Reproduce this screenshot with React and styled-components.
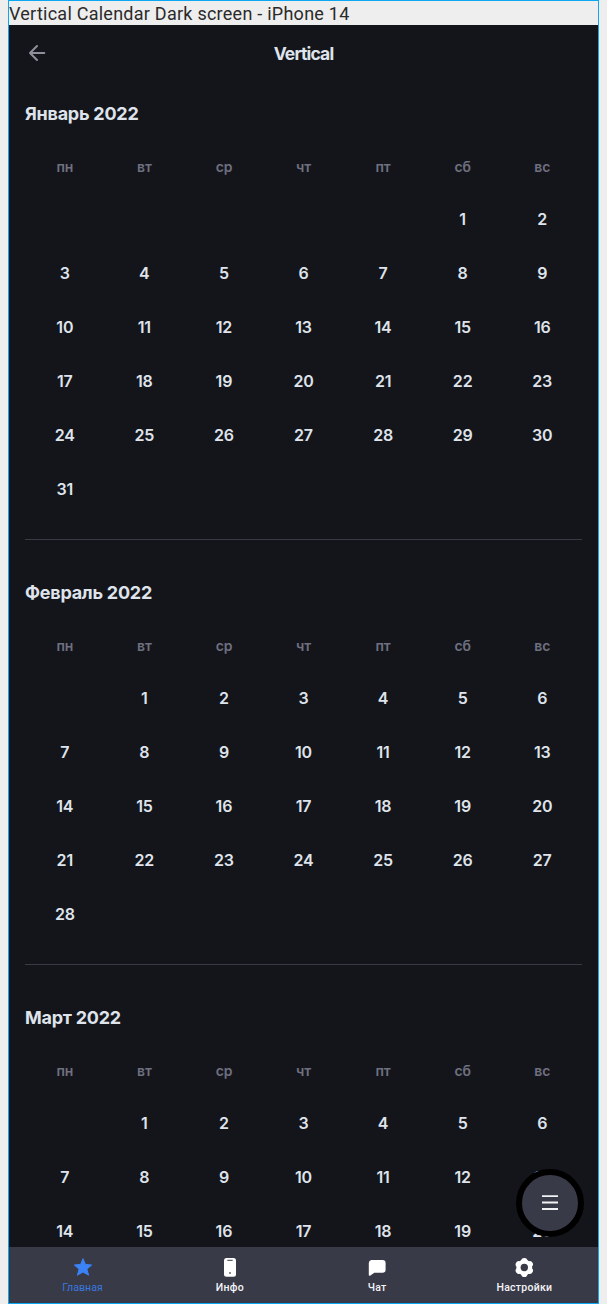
import React from 'react';
import styled, { createGlobalStyle } from 'styled-components';

const GlobalStyle = createGlobalStyle`
  *, *::before, *::after { box-sizing: border-box; }
  html, body { margin: 0; background: #eeeeee; overflow: hidden; }
  body { font-family: Inter, sans-serif; }
`;

const Frame = styled.div`
  position: relative;
  display: flex;
  flex-direction: column;
  width: 591px;
  height: 1304px;
  margin-left: 8px;
  border: 1px solid #0da6f2;
  overflow: hidden;
`;

const FrameLabel = styled.div`
  flex: none;
  height: 24px;
  color: #2a2a2a;
  font: 400 18px/26px Roboto, sans-serif;
  letter-spacing: 0.25px;
  white-space: nowrap;
`;

const Screen = styled.main`
  flex: 1;
  min-height: 0;
  display: flex;
  flex-direction: column;
  background: #14151a;
`;

const Header = styled.header`
  flex: none;
  display: grid;
  grid-template-columns: 24px 1fr 24px;
  align-items: center;
  height: 56px;
  padding: 0 16px;
`;

const BackButton = styled.button`
  display: flex;
  padding: 0;
  border: 0;
  background: none;
  color: #8d8f9a;
`;

const HeaderTitle = styled.h1`
  margin: 0;
  padding-top: 2px;
  color: #dfe3eb;
  font-size: 17.5px;
  font-weight: 700;
  line-height: 24px;
  letter-spacing: -0.85px;
  text-align: center;
`;

const MonthList = styled.div`
  flex: 1;
  min-height: 0;
  margin-top: -20px;
  padding: 0 16px;
  overflow: hidden;
`;

const MonthSection = styled.section`
  padding: 27px 0 23px;
  border-bottom: 1px solid #383a46;
`;

const MonthTitle = styled.h2`
  margin: 0;
  color: #dfe3eb;
  font-size: 18px;
  font-weight: 700;
  line-height: 52px;
  letter-spacing: -0.25px;
`;

const Days = styled.div`
  display: grid;
  grid-template-columns: repeat(7, 1fr);
`;

const Weekday = styled.div`
  height: 52px;
  color: #6e7080;
  font-size: 14px;
  font-weight: 600;
  line-height: 54px;
  letter-spacing: -0.2px;
  text-align: center;
`;

const Day = styled.div`
  grid-column-start: ${({ $column }) => $column || 'auto'};
  color: #dfe3eb;
  font-size: 16px;
  font-weight: 600;
  line-height: 54px;
  letter-spacing: -0.2px;
  text-align: center;
`;

const MenuButton = styled.button`
  position: absolute;
  right: 14px;
  bottom: 66px;
  display: flex;
  align-items: center;
  justify-content: center;
  width: 68px;
  height: 68px;
  padding: 0;
  border: 6px solid #000;
  border-radius: 50%;
  background: #383a48;
  color: #f1f2f4;
`;

const TabBar = styled.nav`
  flex: none;
  display: grid;
  grid-template-columns: repeat(4, 1fr);
  height: 56px;
  background: #383a48;
`;

const Tab = styled.div`
  display: flex;
  flex-direction: column;
  align-items: center;
  padding-top: 10px;
  color: ${({ $active }) => ($active ? '#3b82f6' : '#ffffff')};
`;

const TabLabel = styled.span`
  margin-top: 4px;
  font: ${({ $active }) => ($active ? 400 : 500)} 10.5px/14px Roboto, sans-serif;
  letter-spacing: ${({ $active }) => ($active ? '0.1px' : '0.25px')};
  opacity: ${({ $active }) => ($active ? 0.85 : 0.95)};
`;

const StarIcon = () => (
  <svg width="20" height="20" viewBox="0 0 20 20">
    <path
      fill="currentColor"
      stroke="currentColor"
      strokeLinejoin="round"
      d="M10 1.7 12.4 7.4 18.7 8 13.9 12.1 15.6 18.2 10 15 4.4 18.2 6.1 12.1 1.3 8 7.6 7.4Z"
    />
  </svg>
);

const PhoneIcon = () => (
  <svg width="20" height="20" viewBox="0 0 20 20">
    <rect x="4" y="1" width="12" height="18.7" rx="2.5" fill="currentColor" />
    <path d="M7.7 3.3h4.6" stroke="#383a48" strokeWidth="1" strokeLinecap="round" />
    <rect x="9" y="15" width="2" height="2" rx="0.7" fill="#777985" />
  </svg>
);

const ChatIcon = () => (
  <svg width="20" height="20" viewBox="0 0 20 20">
    <path
      fill="currentColor"
      d="M4.4 3h11.2a3 3 0 0 1 3 3v6.8a3 3 0 0 1-3 3H7.3L3 18.7c-.6.4-1.2 0-1.2-.7V6a3 3 0 0 1 2.6-3Z"
    />
  </svg>
);

const GearIcon = () => (
  <svg width="20" height="20" viewBox="0 0 20 20">
    <g fill="currentColor">
      <circle cx="10.3" cy="10.5" r="7.9" />
      {[0, 60, 120, 180, 240, 300].map((angle) => (
        <circle key={angle} cx="10.3" cy="4.1" r="3.1" transform={`rotate(${angle} 10.3 10.5)`} />
      ))}
    </g>
    <circle cx="10.3" cy="10.5" r="3.7" fill="#383a48" />
  </svg>
);

const WEEKDAYS = ['пн', 'вт', 'ср', 'чт', 'пт', 'сб', 'вс'];

const MONTHS = [
  { title: 'Январь 2022', firstColumn: 6, shownDays: 31 },
  { title: 'Февраль 2022', firstColumn: 2, shownDays: 28 },
  { title: 'Март 2022', firstColumn: 2, shownDays: 20 },
];

const TABS = [
  { label: 'Главная', Icon: StarIcon, active: true },
  { label: 'Инфо', Icon: PhoneIcon },
  { label: 'Чат', Icon: ChatIcon },
  { label: 'Настройки', Icon: GearIcon },
];

const Month = ({ title, firstColumn, shownDays }) => (
  <MonthSection>
    <MonthTitle>{title}</MonthTitle>
    <Days>
      {WEEKDAYS.map((name) => (
        <Weekday key={name}>{name}</Weekday>
      ))}
      {Array.from({ length: shownDays }, (_, i) => (
        <Day key={i} $column={i === 0 ? firstColumn : undefined}>
          {i + 1}
        </Day>
      ))}
    </Days>
  </MonthSection>
);

export default function App() {
  return (
    <>
      <GlobalStyle />
      <Frame>
        <FrameLabel>Vertical Calendar Dark screen - iPhone 14</FrameLabel>
        <Screen>
          <Header>
            <BackButton aria-label="Назад">
              <svg width="24" height="24" viewBox="0 0 24 24" fill="none" stroke="currentColor" strokeWidth="2" strokeLinecap="round" strokeLinejoin="round">
                <path d="M19.3 12H5M12 5 5 12l7 7" />
              </svg>
            </BackButton>
            <HeaderTitle>Vertical</HeaderTitle>
          </Header>
          <MonthList>
            {MONTHS.map((month) => (
              <Month key={month.title} {...month} />
            ))}
          </MonthList>
          <TabBar>
            {TABS.map(({ label, Icon, active }) => (
              <Tab key={label} $active={active}>
                <Icon />
                <TabLabel $active={active}>{label}</TabLabel>
              </Tab>
            ))}
          </TabBar>
        </Screen>
        <MenuButton aria-label="Меню">
          <svg width="20" height="20" viewBox="0 0 20 20" stroke="currentColor" strokeWidth="1.8">
            <path d="M2 3.2h16M2 9.5h16M2 16h16" />
          </svg>
        </MenuButton>
      </Frame>
    </>
  );
}
